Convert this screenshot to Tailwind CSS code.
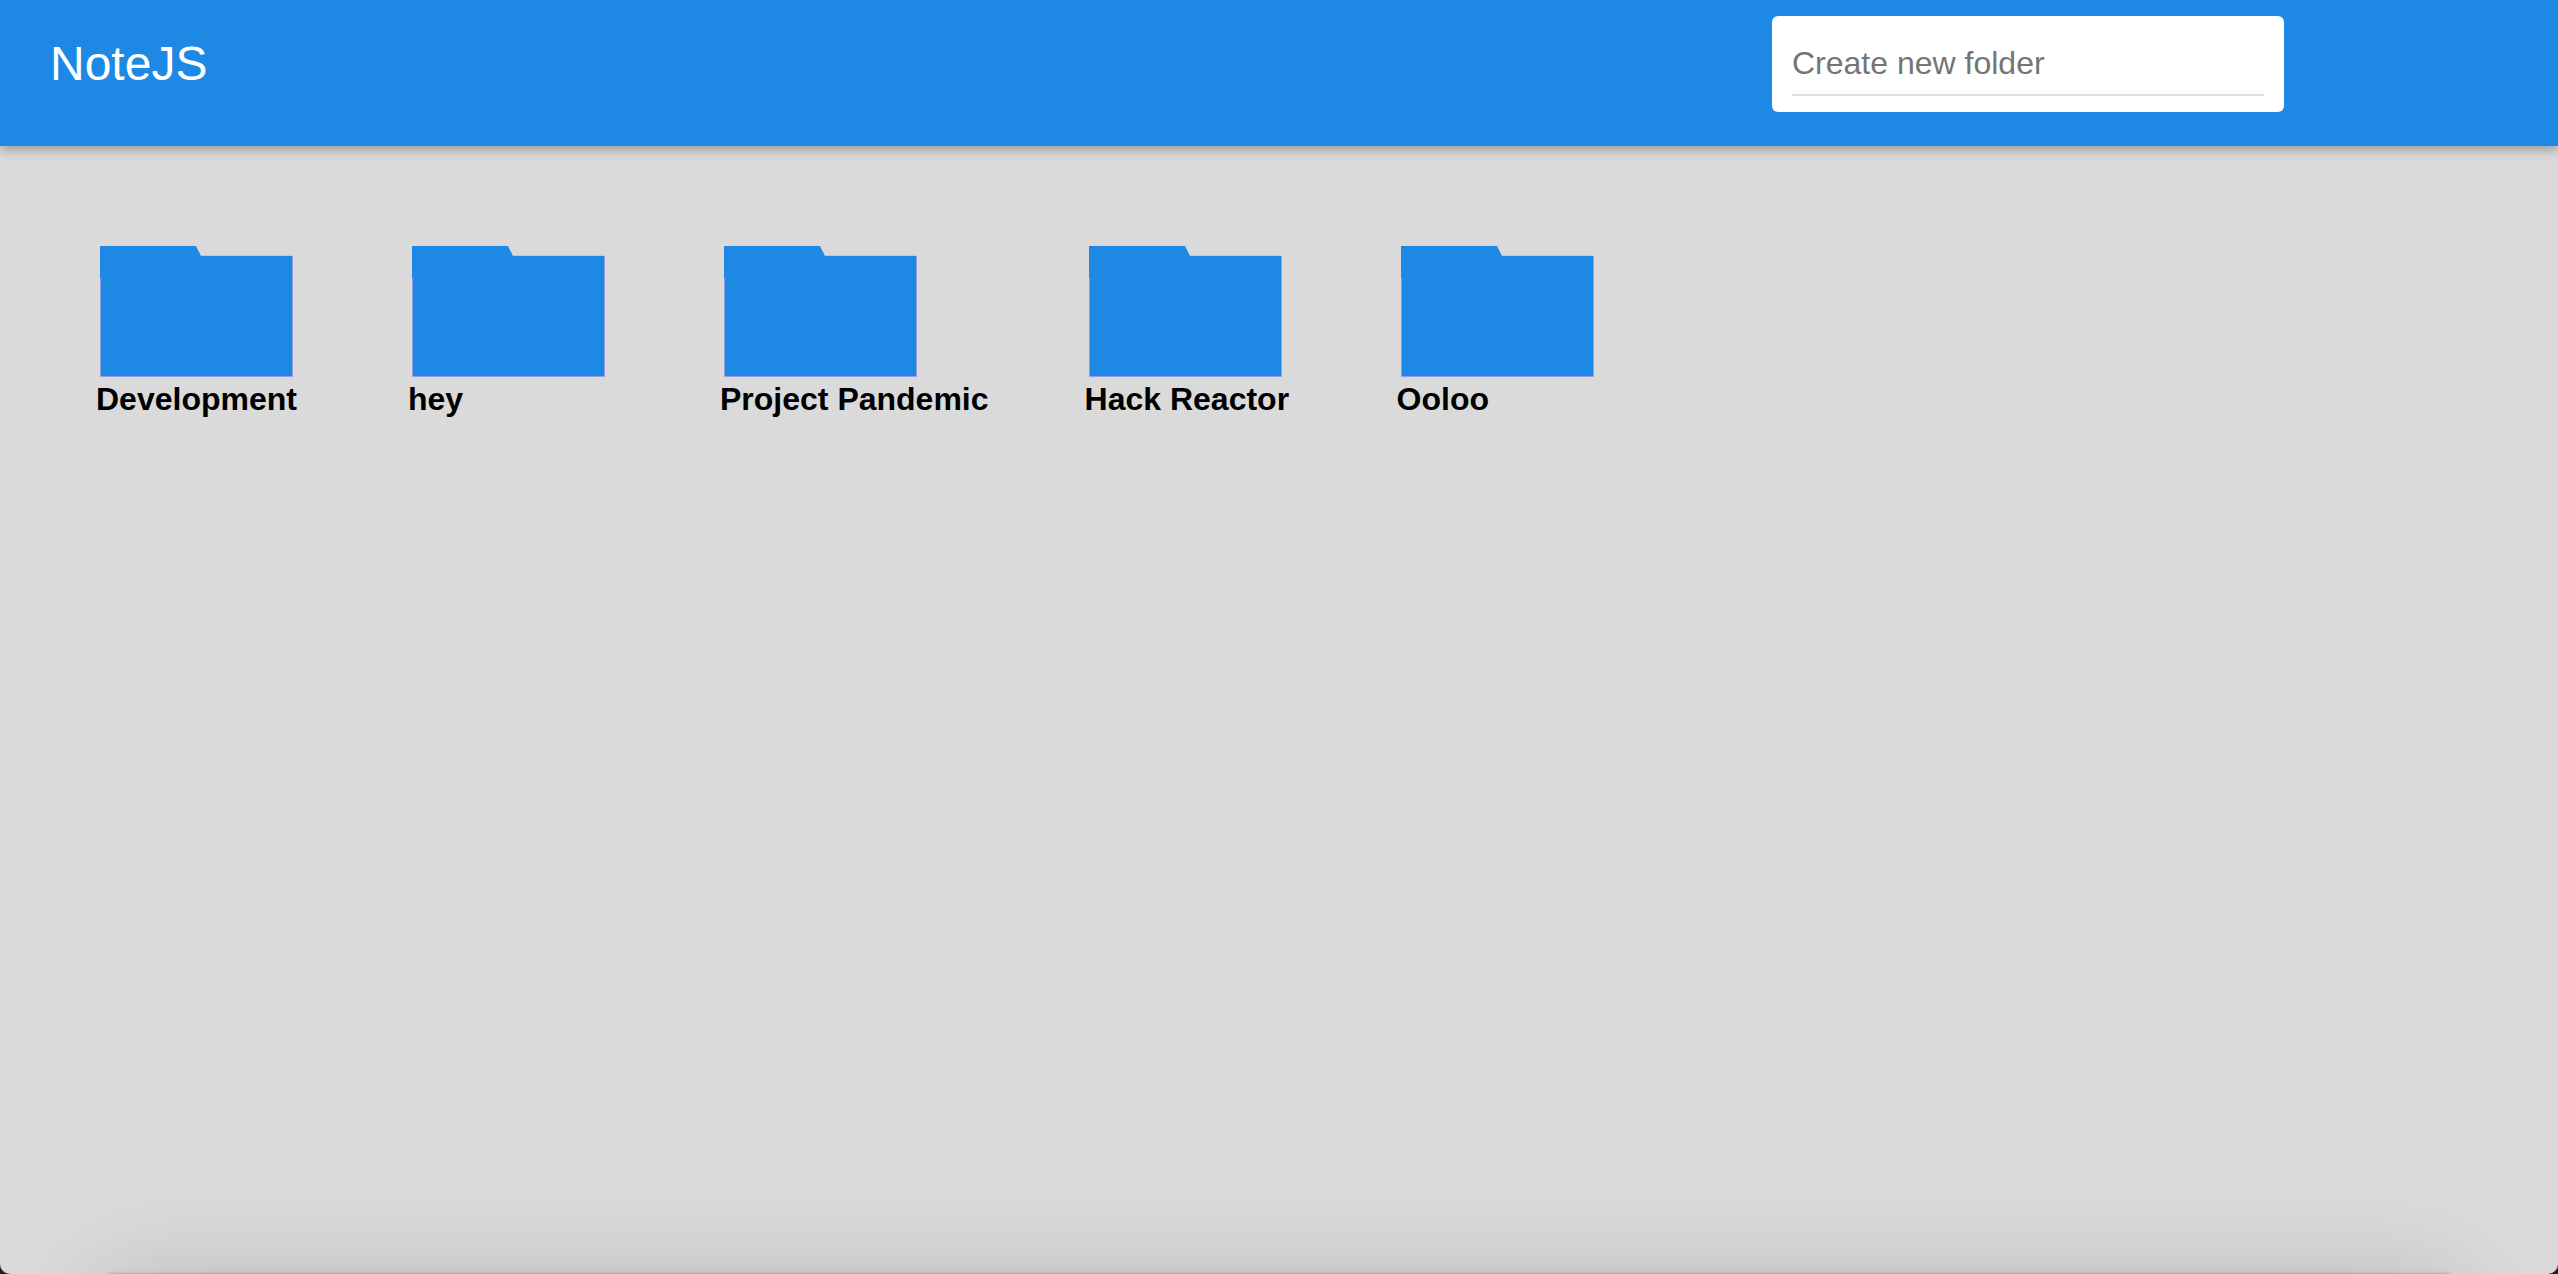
<!DOCTYPE html>
<html lang="en">
<head>
<meta charset="utf-8">
<title>NoteJS</title>
<script src="https://cdn.jsdelivr.net/npm/@tailwindcss/browser@4"></script>
</head>
<body class="bg-[#222222] font-['Liberation_Sans',Arial,sans-serif] text-black">
<svg class="hidden" aria-hidden="true">
  <symbol id="folder" viewBox="0 0 193 131">
    <path d="M.5 10H192.500V130.500H.5Z" fill="#1e88e5" stroke="#a78bea" stroke-opacity=".6"/>
    <path d="M0 0H96L101 10H192V130H1V32H0Z" fill="#1e88e5"/>
  </symbol>
</svg>
<div class="relative flex min-h-screen flex-col overflow-hidden rounded-b-[10px] bg-[#dadada]">
  <header class="flex h-[146px] items-start justify-between bg-[#1e88e5] pt-4 pr-[274px] pl-[50px] shadow-[0_4px_10px_0_rgb(0_0_0/0.28)]">
    <h1 class="text-[48px] leading-[96px] text-white">NoteJS</h1>
    <form class="h-24 w-[512px] rounded-md bg-white px-5 pt-4">
      <input type="text" aria-label="Create new folder" placeholder="Create new folder" class="block h-16 w-full border-b-2 border-[#e0e0e0] text-[32px] outline-none placeholder:text-[#757575]">
    </form>
  </header>
  <main class="flex flex-wrap gap-24 px-24 pt-[100px]">
    <a href="#" class="flex min-w-[216px] flex-col">
      <svg class="ml-1 h-[131px] w-[193px]" aria-hidden="true"><use href="#folder"/></svg>
      <span class="mt-1 text-[32px] leading-9 font-bold">Development</span>
    </a>
    <a href="#" class="flex min-w-[216px] flex-col">
      <svg class="ml-1 h-[131px] w-[193px]" aria-hidden="true"><use href="#folder"/></svg>
      <span class="mt-1 text-[32px] leading-9 font-bold">hey</span>
    </a>
    <a href="#" class="flex min-w-[216px] flex-col">
      <svg class="ml-1 h-[131px] w-[193px]" aria-hidden="true"><use href="#folder"/></svg>
      <span class="mt-1 text-[32px] leading-9 font-bold">Project Pandemic</span>
    </a>
    <a href="#" class="flex min-w-[216px] flex-col">
      <svg class="ml-1 h-[131px] w-[193px]" aria-hidden="true"><use href="#folder"/></svg>
      <span class="mt-1 text-[32px] leading-9 font-bold">Hack Reactor</span>
    </a>
    <a href="#" class="flex min-w-[216px] flex-col">
      <svg class="ml-1 h-[131px] w-[193px]" aria-hidden="true"><use href="#folder"/></svg>
      <span class="mt-1 text-[32px] leading-9 font-bold">Ooloo</span>
    </a>
  </main>
  <div class="pointer-events-none absolute inset-x-[108px] top-full h-80 shadow-[0_0_3px_0_rgb(0_0_0/0.3),0_20px_100px_0_rgb(0_0_0/0.22)]" aria-hidden="true"></div>
</div>
</body>
</html>
